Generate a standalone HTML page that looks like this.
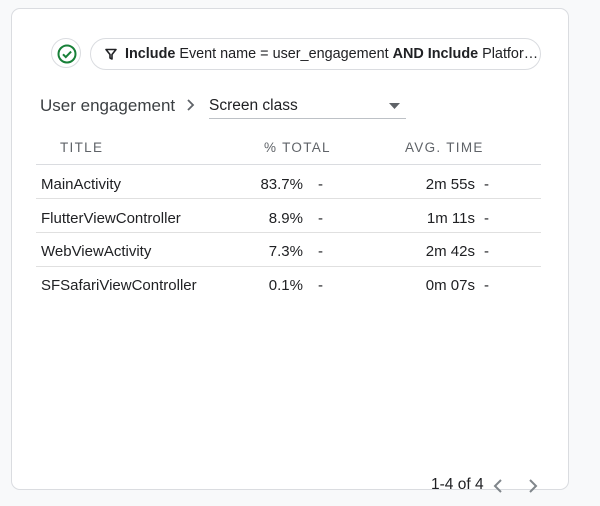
<!DOCTYPE html>
<html><head><style>
body{margin:0;width:600px;height:506px;background:#f8f9fa;font-family:"Liberation Sans",sans-serif;color:#202124;position:relative;overflow:hidden}
.card{position:absolute;left:11px;top:8px;width:558px;height:482px;background:#fff;border:1px solid #dadce0;border-radius:9px;box-sizing:border-box}
.a{position:absolute;white-space:nowrap}
.line{position:absolute;height:1px;background:#e0e0e0}
.r{font-size:15px;color:#202124}
.h{font-size:13.5px;letter-spacing:1.3px;color:#5f6368}
</style></head><body>
<div class="card"></div>
<div class="a" style="left:51px;top:38px;width:30px;height:30px;border:1px solid #dadce0;border-radius:50%;box-sizing:border-box"></div>
<svg class="a" style="left:56px;top:43px" width="22" height="22" viewBox="0 0 22 22"><circle cx="11" cy="11" r="8.5" fill="none" stroke="#188038" stroke-width="2"/><path d="M7 11.3l2.8 2.8 5.3-5.5" fill="none" stroke="#188038" stroke-width="2"/></svg>
<div class="a" style="left:90px;top:38px;width:451px;height:32px;border:1px solid #dadce0;border-radius:16px;box-sizing:border-box"></div>
<svg class="a" style="left:104px;top:47px" width="14" height="14" viewBox="0 0 14 14"><path d="M2 2.5h10L8 7.5v4.5L6 11V7.5z" fill="none" stroke="#202124" stroke-width="1.6" stroke-linejoin="round"/></svg>
<div class="a" style="left:125px;top:46px;font-size:14.4px"><b>Include</b> Event name = user_engagement <b>AND Include</b> Platfor…</div>
<div class="a" style="left:40px;top:96px;font-size:17px;color:#3c4043">User engagement</div>
<svg class="a" style="left:185px;top:98px" width="12" height="14" viewBox="0 0 12 14"><path d="M3 2l5 5-5 5" fill="none" stroke="#5f6368" stroke-width="1.8"/></svg>
<div class="a" style="left:209px;top:97px;font-size:15.5px;color:#202124">Screen class</div>
<svg class="a" style="left:389px;top:102px" width="12" height="8"><path d="M0 1h11L5.5 7z" fill="#5f6368"/></svg>
<div class="line" style="left:209px;top:118px;width:197px;background:#bdc1c6"></div>
<div class="a h" style="left:60px;top:140px">TITLE</div>
<div class="a h" style="left:264px;top:140px">% TOTAL</div>
<div class="a h" style="left:405px;top:140px">AVG. TIME</div>
<div class="line" style="left:36px;top:164px;width:505px;background:#dadce0"></div>
<div class="a r" style="left:41px;top:176px">MainActivity</div>
<div class="a r" style="right:297px;top:176px">83.7%</div><div class="a r" style="left:318px;top:176px">-</div>
<div class="a r" style="right:125px;top:176px">2m 55s</div><div class="a r" style="left:484px;top:176px">-</div>
<div class="line" style="left:36px;top:198px;width:505px"></div>
<div class="a r" style="left:41px;top:210px">FlutterViewController</div>
<div class="a r" style="right:297px;top:210px">8.9%</div><div class="a r" style="left:318px;top:210px">-</div>
<div class="a r" style="right:125px;top:210px">1m 11s</div><div class="a r" style="left:484px;top:210px">-</div>
<div class="line" style="left:36px;top:232px;width:505px"></div>
<div class="a r" style="left:41px;top:243px">WebViewActivity</div>
<div class="a r" style="right:297px;top:243px">7.3%</div><div class="a r" style="left:318px;top:243px">-</div>
<div class="a r" style="right:125px;top:243px">2m 42s</div><div class="a r" style="left:484px;top:243px">-</div>
<div class="line" style="left:36px;top:266px;width:505px"></div>
<div class="a r" style="left:41px;top:277px">SFSafariViewController</div>
<div class="a r" style="right:297px;top:277px">0.1%</div><div class="a r" style="left:318px;top:277px">-</div>
<div class="a r" style="right:125px;top:277px">0m 07s</div><div class="a r" style="left:484px;top:277px">-</div>
<div class="a" style="left:431px;top:476px;font-size:15.5px;color:#202124">1-4 of 4</div>
<svg class="a" style="left:491px;top:478px" width="14" height="16"><path d="M10 2L4 8l6 6" fill="none" stroke="#80868b" stroke-width="2"/></svg>
<svg class="a" style="left:526px;top:478px" width="14" height="16"><path d="M4 2l6 6-6 6" fill="none" stroke="#80868b" stroke-width="2"/></svg>
</body></html>
